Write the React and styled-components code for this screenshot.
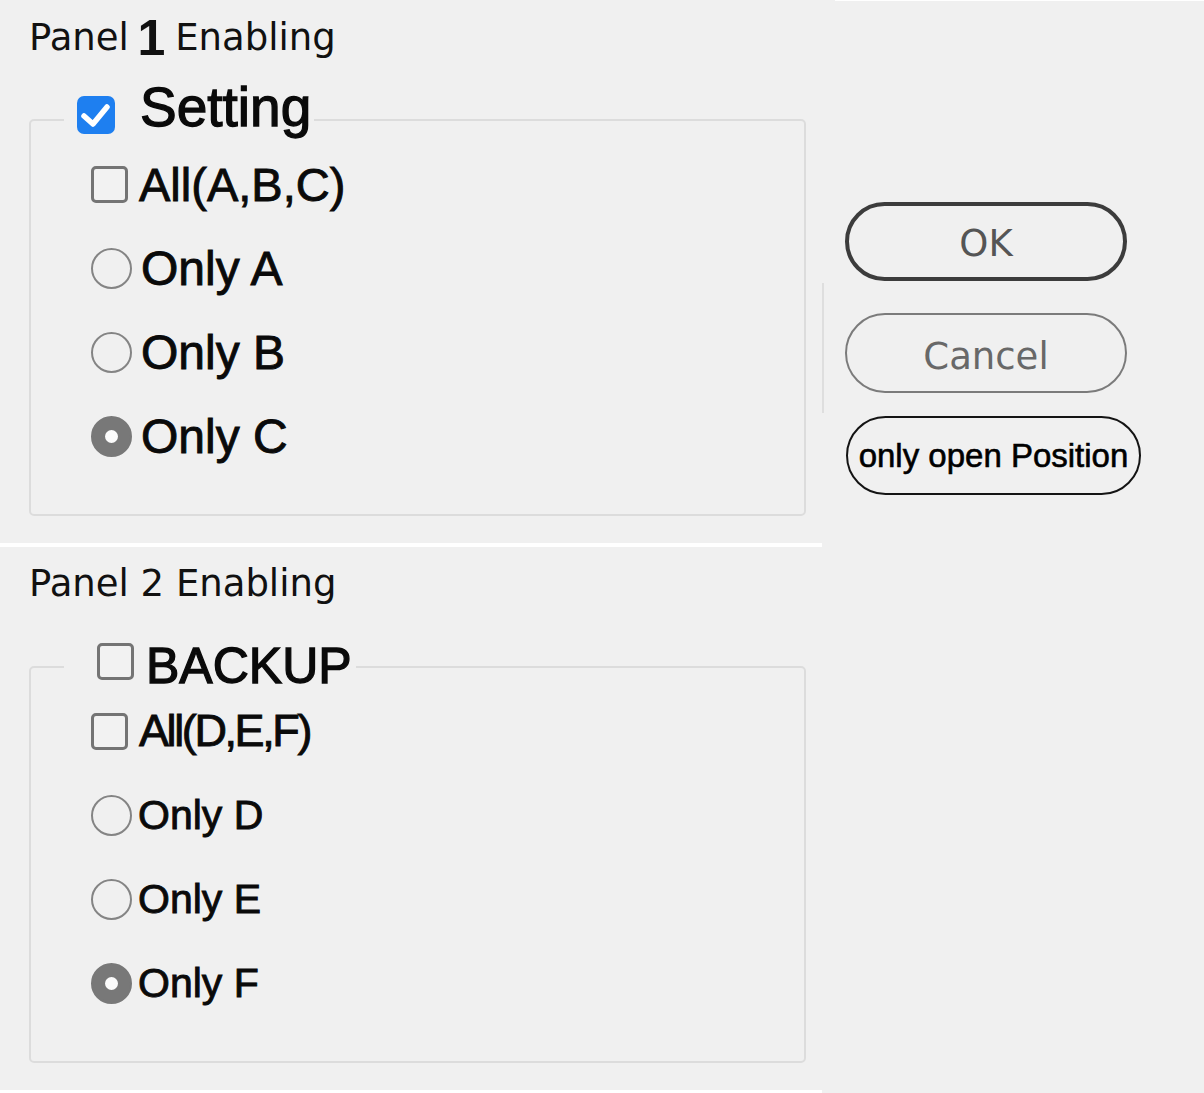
import React from "react";
import styled, { createGlobalStyle } from "styled-components";

const GlobalStyle = createGlobalStyle`
  html, body {
    margin: 0;
    background: #f0f0f0;
  }
  body {
    font-family: "Liberation Sans", Arial, sans-serif;
    color: #0a0a0a;
  }
`;

const Page = styled.div`
  display: flex;
  width: 1204px;
  height: 1093px;
  overflow: hidden;
  background: #f0f0f0;
`;

const LeftPane = styled.div`
  width: 822px;
  display: flex;
  flex-direction: column;
  flex-shrink: 0;
`;

const Section = styled.section`
  padding-top: ${(p) => p.$top}px;
`;

const Title = styled.h2`
  margin: 0 0 0 29px;
  height: 43px;
  font-family: "DejaVu Sans", Verdana, sans-serif;
  font-weight: normal;
  font-size: 37px;
  line-height: 43px;
  color: #111;
  white-space: nowrap;
`;

const Digit = styled.span`
  display: inline-block;
  font-family: "Liberation Sans", Arial, sans-serif;
  font-weight: bold;
  font-size: 50px;
  vertical-align: -5px;
  margin: 0 -2px 0 -3px;
`;

const Group = styled.div`
  position: relative;
  box-sizing: border-box;
  width: 777px;
  height: 397px;
  margin: ${(p) => p.$gap}px 0 27px 29px;
  padding: 21px 0 0 60px;
  border: 2px solid #dcdcdc;
  border-radius: 5px;
`;

/* the legend sits over the top border of its group */
const Legend = styled.div`
  position: absolute;
  top: ${(p) => p.$top}px;
  left: 33px;
  display: flex;
  align-items: flex-start;
  padding: ${(p) => p.$pad};
  background: #f0f0f0;
`;

const LegendText = styled.span`
  font-size: ${(p) => p.$size}px;
  line-height: ${(p) => p.$size}px;
  margin-top: ${(p) => p.$mt}px;
  margin-left: ${(p) => p.$ml}px;
  letter-spacing: ${(p) => p.$ls || 0}px;
  -webkit-text-stroke: 1.3px #0a0a0a;
  white-space: nowrap;
`;

const Row = styled.label`
  display: flex;
  align-items: center;
  height: 84px;
`;

const OptionText = styled.span`
  font-size: ${(p) => p.$size}px;
  letter-spacing: ${(p) => p.$ls || 0}px;
  margin-left: ${(p) => p.$ml}px;
  -webkit-text-stroke: 0.9px #0a0a0a;
  white-space: nowrap;
`;

const Box = styled.span`
  box-sizing: border-box;
  display: inline-flex;
  align-items: center;
  justify-content: center;
  flex-shrink: 0;
  width: ${(p) => p.$size}px;
  height: ${(p) => p.$size}px;
  margin-top: ${(p) => p.$mt || 0}px;
  border-radius: ${(p) => (p.$checked ? 7 : 5)}px;
  border: ${(p) => (p.$checked ? "none" : "3px solid #747474")};
  background: ${(p) => (p.$checked ? "#1e7ff0" : "#f2f2f2")};
`;

const Radio = styled.span`
  box-sizing: border-box;
  display: inline-flex;
  align-items: center;
  justify-content: center;
  flex-shrink: 0;
  width: 41px;
  height: 41px;
  border-radius: 50%;
  border: ${(p) => (p.$checked ? "2px solid #787878" : "2.5px solid #848484")};
  background: ${(p) => (p.$checked ? "#787878" : "transparent")};

  &::after {
    content: "";
    display: ${(p) => (p.$checked ? "block" : "none")};
    width: 13px;
    height: 13px;
    border-radius: 50%;
    background: #fbfbfb;
  }
`;

const Strip = styled.div`
  height: ${(p) => p.$h}px;
  background: #ffffff;
`;

const RightPane = styled.div`
  display: flex;
  flex-direction: column;
  flex: 1;
`;

const TopEdge = styled.div`
  height: 1px;
  margin-left: 13px;
  background: #ffffff;
`;

const Controls = styled.div`
  display: flex;
  align-items: flex-start;
`;

const Separator = styled.div`
  width: 2px;
  height: 130px;
  margin-top: 282px;
  background: #dedede;
`;

const Buttons = styled.div`
  display: flex;
  flex-direction: column;
  align-items: flex-start;
  margin-left: 21px;
  padding-top: 201px;
`;

const Pill = styled.button`
  box-sizing: border-box;
  display: flex;
  align-items: center;
  justify-content: center;
  width: ${(p) => p.$w}px;
  height: ${(p) => p.$h}px;
  margin-top: ${(p) => p.$mt || 0}px;
  margin-left: ${(p) => p.$ml || 0}px;
  padding: ${(p) => p.$pt || 0}px 0 0;
  border: ${(p) => p.$border};
  border-radius: 42px;
  background: transparent;
  color: ${(p) => p.$color};
  font-family: ${(p) =>
    p.$sans ? '"Liberation Sans", Arial, sans-serif' : '"DejaVu Sans", Verdana, sans-serif'};
  font-size: ${(p) => p.$size}px;
  -webkit-text-stroke: ${(p) => (p.$sans ? "0.6px #000" : "0")};
  white-space: nowrap;
  cursor: pointer;
`;

const Check = () => (
  <svg width="38" height="38" viewBox="0 0 38 38">
    <polyline
      points="7,20 16,28 30,11"
      fill="none"
      stroke="#fff"
      strokeWidth="5.5"
      strokeLinecap="round"
      strokeLinejoin="round"
    />
  </svg>
);

const panelOne = {
  all: "All(A,B,C)",
  options: ["Only A", "Only B", "Only C"],
};

const panelTwo = {
  all: "All(D,E,F)",
  options: ["Only D", "Only E", "Only F"],
};

export default function App() {
  return (
    <Page>
      <GlobalStyle />
      <LeftPane>
        <Section $top={16}>
          <Title>
            Panel <Digit>1</Digit> Enabling
          </Title>
          <Group $gap={60}>
            <Legend $top={-41} $pad="0 3px 0 13px">
              <Box $size={38} $mt={16} $checked>
                <Check />
              </Box>
              <LegendText $size={55} $mt={0} $ml={25}>
                Setting
              </LegendText>
            </Legend>
            <Row>
              <Box $size={37} />
              <OptionText $size={47} $ml={11}>
                {panelOne.all}
              </OptionText>
            </Row>
            {panelOne.options.map((o, i) => (
              <Row key={o}>
                <Radio $checked={i === 2} />
                <OptionText $size={48} $ml={9}>
                  {o}
                </OptionText>
              </Row>
            ))}
          </Group>
        </Section>
        <Strip $h={4} />
        <Section $top={15}>
          <Title>Panel 2 Enabling</Title>
          <Group $gap={61}>
            <Legend $top={-38} $pad="0 4px 0 33px">
              <Box $size={37} $mt={13} />
              <LegendText $size={50} $mt={11} $ml={12}>
                BACKUP
              </LegendText>
            </Legend>
            <Row>
              <Box $size={37} />
              <OptionText $size={45} $ls={-2.4} $ml={11}>
                {panelTwo.all}
              </OptionText>
            </Row>
            {panelTwo.options.map((o, i) => (
              <Row key={o}>
                <Radio $checked={i === 2} />
                <OptionText $size={41} $ml={6}>
                  {o}
                </OptionText>
              </Row>
            ))}
          </Group>
        </Section>
        <Strip $h={3} />
      </LeftPane>
      <RightPane>
        <TopEdge />
        <Controls>
          <Separator />
          <Buttons>
            <Pill
              $w={282}
              $h={79}
              $pt={3}
              $border="4px solid #3c3c3c"
              $color="#555"
              $size={37}
            >
              OK
            </Pill>
            <Pill
              $w={282}
              $h={80}
              $mt={32}
              $pt={6}
              $border="2.5px solid #7b7b7b"
              $color="#686868"
              $size={37}
            >
              Cancel
            </Pill>
            <Pill
              $w={295}
              $h={79}
              $mt={23}
              $ml={1}
              $border="2.5px solid #141414"
              $color="#000"
              $size={33}
              $sans
            >
              only open Position
            </Pill>
          </Buttons>
        </Controls>
      </RightPane>
    </Page>
  );
}
